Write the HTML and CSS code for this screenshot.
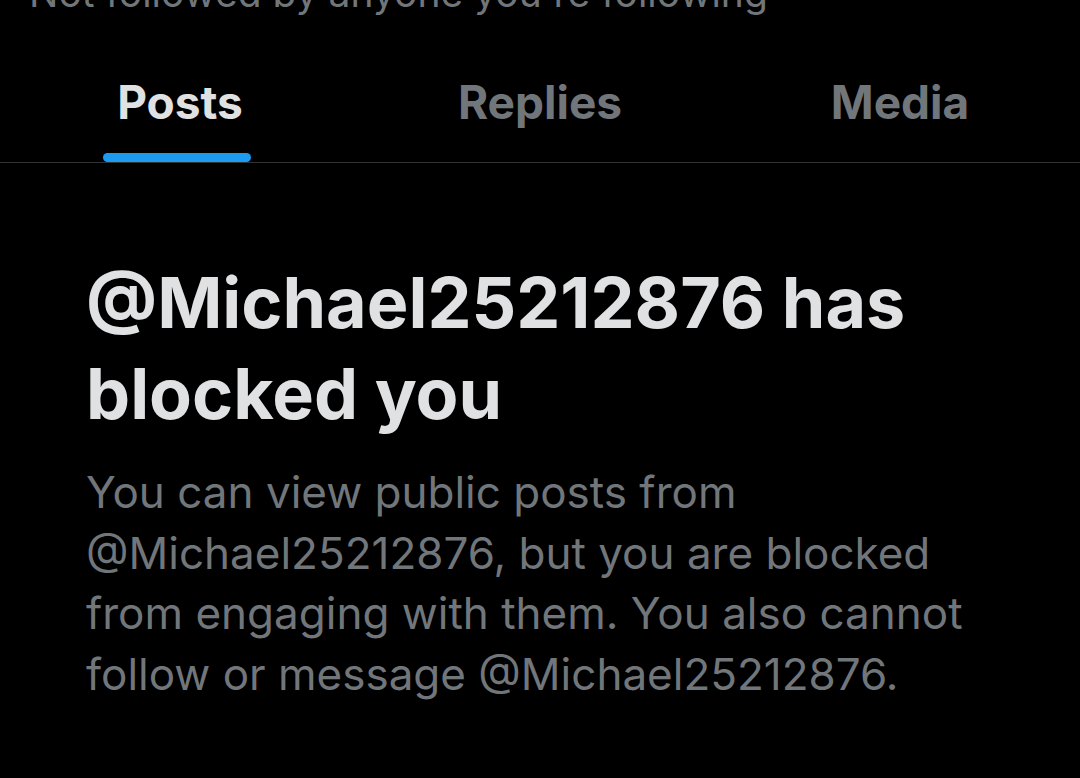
FILE: index.html
```html
<!DOCTYPE html>
<html lang="en">
<head>
<meta charset="utf-8">
<title>Blocked</title>
<link rel="stylesheet" href="styles.css">
</head>
<body>
<div class="page">
  <div class="subline">Not followed by anyone you're following</div>
  <nav class="tabs">
    <div class="tab active"><span class="tab-label">Posts<span class="indicator"></span></span></div>
    <div class="tab"><span class="tab-label">Replies</span></div>
    <div class="tab"><span class="tab-label">Media</span></div>
  </nav>
  <section class="blocked">
    <h1 class="title">@Michael25212876 has blocked you</h1>
    <p class="desc">You can view public posts from @Michael25212876, but you are blocked from engaging with them. You also cannot follow or message @Michael25212876.</p>
  </section>
</div>
</body>
</html>
```
FILE: styles.css
```css
html, body {
  margin: 0;
  padding: 0;
  background: #000;
}
body {
  width: 1080px;
  height: 778px;
  overflow: hidden;
  font-family: Inter, "Liberation Sans", Arial, sans-serif;
  color: #e7e9ea;
}
.page {
  display: flex;
  flex-direction: column;
}
.subline {
  margin-top: -33px;
  padding-left: 29px;
  font-size: 39px;
  line-height: 52px;
  color: #71767b;
  white-space: nowrap;
}
.tabs {
  display: flex;
  margin-top: 43px;
  height: 100px;
  border-bottom: 1px solid #2f3336;
}
.tab {
  flex: 1;
  display: flex;
  justify-content: center;
  font-size: 46px;
  font-weight: 700;
  color: #71767b;
}
.tab.active {
  color: #e0e1e2;
}
.tab-label {
  position: relative;
  padding-top: 14px;
  line-height: 52px;
}
.indicator {
  position: absolute;
  left: -14px;
  right: -8px;
  bottom: 0;
  height: 9px;
  border-radius: 5px;
  background: #1d9bf0;
}
.blocked {
  padding: 0 86px;
}
.title {
  margin: 94px 0 0;
  font-size: 70px;
  font-weight: 700;
  line-height: 91px;
  color: #e0e1e2;
}
.desc {
  margin: 23px 0 0;
  font-size: 44px;
  line-height: 60.5px;
  color: #71767b;
}
```
